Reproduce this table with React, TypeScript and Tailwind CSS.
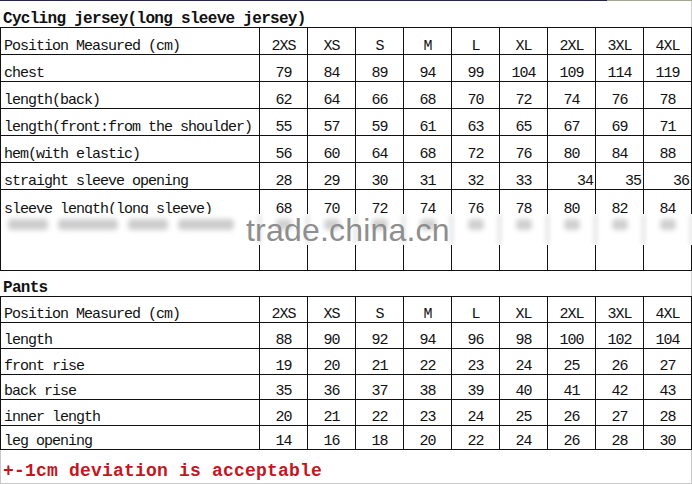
import React from 'react';

const SIZES = ['2XS', 'XS', 'S', 'M', 'L', 'XL', '2XL', '3XL', '4XL'];

type RowData = { label: string; values: string[]; right?: number[] };

const jersey: RowData[] = [
  { label: 'chest', values: ['79', '84', '89', '94', '99', '104', '109', '114', '119'] },
  { label: 'length(back)', values: ['62', '64', '66', '68', '70', '72', '74', '76', '78'] },
  { label: 'length(front:from the shoulder)', values: ['55', '57', '59', '61', '63', '65', '67', '69', '71'] },
  { label: 'hem(with elastic)', values: ['56', '60', '64', '68', '72', '76', '80', '84', '88'] },
  { label: 'straight sleeve opening', values: ['28', '29', '30', '31', '32', '33', '34', '35', '36'], right: [6, 7, 8] },
];

const sleeve: RowData = { label: 'sleeve length(long sleeve)', values: ['68', '70', '72', '74', '76', '78', '80', '82', '84'] };

const pants: RowData[] = [
  { label: 'length', values: ['88', '90', '92', '94', '96', '98', '100', '102', '104'] },
  { label: 'front rise', values: ['19', '20', '21', '22', '23', '24', '25', '26', '27'] },
  { label: 'back rise', values: ['35', '36', '37', '38', '39', '40', '41', '42', '43'] },
  { label: 'inner length', values: ['20', '21', '22', '23', '24', '25', '26', '27', '28'] },
  { label: 'leg opening', values: ['14', '16', '18', '20', '22', '24', '26', '28', '30'] },
];

const pantHeights = ['h-[26px]', 'h-[26px]', 'h-[26px]', 'h-[25px]', 'h-[26px]', 'h-[24px]'];

// smudged word shapes left by the watermark blur
const blobs = [40, 60, 40, 56];

function Row({ row, height, top }: { row: RowData; height: string; top?: boolean }) {
  const align = top ? 'items-start pt-[12px]' : 'items-end';
  return (
    <div className={`flex ${height} border-b border-[#111]`}>
      <div className={`flex w-[259px] shrink-0 ${align} border-r border-[#111] pl-[3px]`}>
        <span className="whitespace-nowrap leading-[15px]">{row.label}</span>
      </div>
      {row.values.map((v, i) => (
        <div
          key={i}
          className={`flex w-[48px] shrink-0 ${align} border-r border-[#111] ${
            row.right?.includes(i) ? 'justify-end pr-[2px]' : 'justify-center'
          }`}
        >
          <span className="leading-[15px]">{v}</span>
        </div>
      ))}
    </div>
  );
}

function HeaderRow({ height }: { height: string }) {
  return <Row row={{ label: 'Position Measured (cm)', values: SIZES }} height={height} />;
}

export default function App() {
  return (
    <div className="relative h-[484px] w-[692px] overflow-hidden bg-white [font-family:'Liberation_Mono','Courier_New',monospace] text-[15px] tracking-[-1px] text-[#111]">
      {/* frame top edge */}
      <div className="flex h-px">
        <div className="w-[607px] bg-[#25264a]" />
        <div className="flex-1 bg-[#a5a594]" />
      </div>

      <div className="flex h-[26px] items-end border-r border-[#cfcfcf] pl-[3px]">
        <span className="text-[16px] font-bold leading-[16px] tracking-[-0.7px]">
          Cycling jersey(long sleeve jersey)
        </span>
      </div>

      {/* jersey table */}
      <div className="relative border-l border-t border-[#111]">
        <HeaderRow height="h-[27px]" />
        {jersey.map((r) => (
          <Row key={r.label} row={r} height="h-[27px]" />
        ))}
        <Row row={sleeve} height="h-[81px]" top />

        {/* blurred strip under watermark */}
        <div className="absolute left-0 right-0 top-[186px] h-[31px] overflow-hidden bg-white">
          <div className="flex h-[31px] blur-[2.5px]">
            <div className="flex w-[259px] shrink-0 items-start gap-[10px] border-r border-[#999] pl-[7px] pt-[5px]">
              {blobs.map((w, i) => (
                <div key={i} className="h-[11px] rounded-sm bg-[#cdcdcd]" style={{ width: w }} />
              ))}
            </div>
            {sleeve.values.map((_, i) => (
              <div key={i} className="flex w-[48px] shrink-0 justify-center border-r border-[#999] pt-[5px]">
                <div className="h-[11px] w-[16px] rounded-sm bg-[#d0d0d0]" />
              </div>
            ))}
          </div>
        </div>
        <div className="absolute left-[245px] top-[190px] [font-family:'Liberation_Sans',Arial,sans-serif] text-[32px] leading-[24px] tracking-[0.2px] text-[#8e8e8e]">
          trade.china.cn
        </div>
      </div>

      <div className="flex h-[25px] items-end border-r border-[#cfcfcf] pl-[3px]">
        <span className="text-[16px] font-bold leading-[16px] tracking-[-0.7px]">Pants</span>
      </div>

      {/* pants table */}
      <div className="border-l border-t border-[#111]">
        <HeaderRow height={pantHeights[0]} />
        {pants.map((r, i) => (
          <Row key={r.label} row={r} height={pantHeights[i + 1]} />
        ))}
      </div>

      <div className="h-[34px] border-b border-l border-r border-[#c8c8c8] pl-[2px] pt-[12px]">
        <span className="whitespace-nowrap text-[18px] font-bold leading-[18px] tracking-[0.2px] text-[#c4161c]">
          +-1cm deviation is acceptable
        </span>
      </div>
    </div>
  );
}
